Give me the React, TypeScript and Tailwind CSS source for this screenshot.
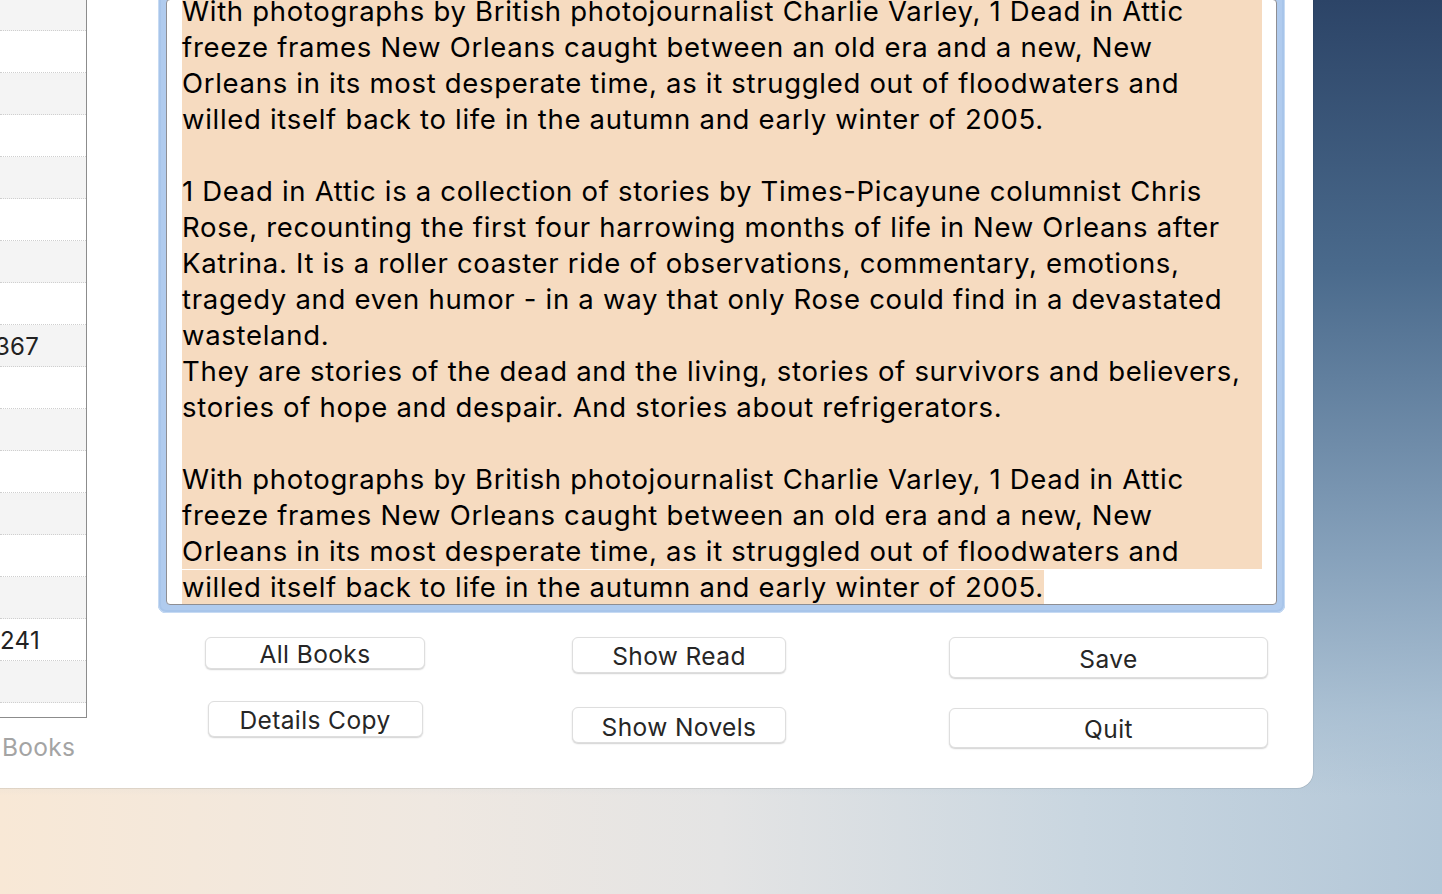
import React from 'react'

const lines: string[] = [
  'With photographs by British photojournalist Charlie Varley, 1 Dead in Attic',
  'freeze frames New Orleans caught between an old era and a new, New',
  'Orleans in its most desperate time, as it struggled out of floodwaters and',
  'willed itself back to life in the autumn and early winter of 2005.',
  '',
  '1 Dead in Attic is a collection of stories by Times-Picayune columnist Chris',
  'Rose, recounting the first four harrowing months of life in New Orleans after',
  'Katrina. It is a roller coaster ride of observations, commentary, emotions,',
  'tragedy and even humor - in a way that only Rose could find in a devastated',
  'wasteland.',
  'They are stories of the dead and the living, stories of survivors and believers,',
  'stories of hope and despair. And stories about refrigerators.',
  '',
  'With photographs by British photojournalist Charlie Varley, 1 Dead in Attic',
  'freeze frames New Orleans caught between an old era and a new, New',
  'Orleans in its most desperate time, as it struggled out of floodwaters and',
]
const lastLine = 'willed itself back to life in the autumn and early winter of 2005.'

const rowText: Record<number, { t: string; ml: string }> = {
  8: { t: '367', ml: '-ml-[5px]' },
  15: { t: '241', ml: 'ml-0' },
}

function Btn({ label, cls }: { label: string; cls: string }) {
  return (
    <div
      className={`flex items-center justify-center bg-white rounded-[6px] border border-[#dedede] shadow-[0_1px_1.5px_rgba(0,0,0,0.18)] text-[24.5px] tracking-[0.4px] text-[#262626] ${cls}`}
    >
      {label}
    </div>
  )
}

export default function App() {
  return (
    <div
      className="w-[1442px] h-[894px] overflow-hidden bg-[linear-gradient(to_bottom,#2c4467_0%,#4a6a8c_30%,#86a1bb_62%,rgba(165,188,208,0.7)_80%,rgba(165,188,208,0)_89%),linear-gradient(to_right,#f8e8d6_0%,#efe8e1_30%,#e4e4e4_50%,#c9d6e0_75%,#b3c7d8_100%)]"
      style={{ fontFamily: 'Inter, "Noto Sans", sans-serif' }}
    >
      <div className="w-[1313px] h-[788px] bg-white rounded-br-[16px] shadow-[0_1px_0_rgba(0,0,0,0.08),1px_0_0_rgba(0,0,0,0.05)] flex overflow-hidden">
        {/* left list */}
        <div className="w-[87px] shrink-0 flex flex-col">
          <div className="h-[718px] border-r border-b border-[#8c8c8c] overflow-hidden">
            <div className="-mt-[11px]">
              {Array.from({ length: 17 }).map((_, i) => (
                <div
                  key={i}
                  className={`h-[42px] border-b border-dotted border-[#cfcfcf] flex items-center overflow-hidden ${i % 2 === 0 ? 'bg-[#f4f4f4]' : 'bg-white'}`}
                >
                  {rowText[i] && (
                    <span className={`text-[24px] tracking-[0.3px] text-[#222] whitespace-nowrap pt-[2px] ${rowText[i].ml}`}>{rowText[i].t}</span>
                  )}
                </div>
              ))}
            </div>
          </div>
          <div className="pl-[2px] pt-[15px] text-[24.5px] tracking-[0.3px] text-[#a4a4a4] leading-[28px] whitespace-nowrap">Books</div>
        </div>

        {/* main */}
        <div className="flex-1 pl-[71px] flex flex-col">
          <div className="-mt-[9px] w-[1127px] p-[8px] rounded-[8px] bg-[#b0cbee] shadow-[inset_0_0_0_1px_#c6daf3,inset_0_0_0_3px_#a8c5ea]">
            <div className="h-[606px] bg-white border border-[#8e8e93] rounded-[4px] overflow-hidden pl-[15px] pr-[14px]">
              <div className="-mt-[7px] text-[27.5px] tracking-[0.7px] text-black leading-[36px]">
                {lines.map((l, i) => (
                  <div key={i} className="h-[36px] bg-[#f6dbc0] whitespace-nowrap">
                    {l}
                  </div>
                ))}
                <div className="h-[36px] whitespace-nowrap">
                  <span className="bg-[#f6dbc0]">{lastLine}</span>
                </div>
              </div>
            </div>
          </div>

          <div className="flex mt-[24px]">
            <div className="ml-[47px] w-[220px] flex flex-col items-center">
              <Btn label="All Books" cls="w-[220px] h-[32px] pt-[3px]" />
              <Btn label="Details Copy" cls="w-[215px] h-[36px] mt-[32px] pt-[3px]" />
            </div>
            <div className="ml-[147px] w-[214px] flex flex-col">
              <Btn label="Show Read" cls="w-[214px] h-[36px] pt-[3px]" />
              <Btn label="Show Novels" cls="w-[214px] h-[36px] mt-[34px] pt-[4px]" />
            </div>
            <div className="ml-[163px] w-[319px] flex flex-col">
              <Btn label="Save" cls="w-[319px] h-[41px] pt-[4px]" />
              <Btn label="Quit" cls="w-[319px] h-[40px] mt-[30px] pt-[3px]" />
            </div>
          </div>
        </div>
      </div>
    </div>
  )
}
